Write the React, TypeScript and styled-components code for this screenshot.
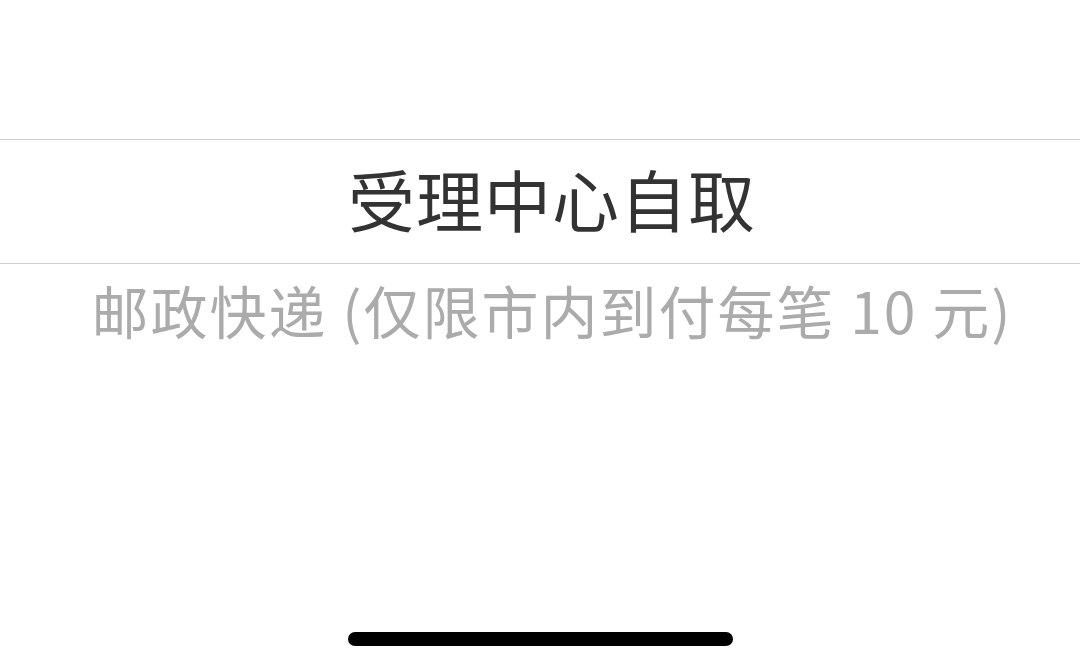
import React from 'react';
import styled, { createGlobalStyle } from 'styled-components';

const GlobalStyle = createGlobalStyle`
  html, body {
    margin: 0;
    padding: 0;
    background: #ffffff;
  }
  body {
    font-family: "Noto Sans CJK SC", "Noto Sans", sans-serif;
  }
`;

const options = ['受理中心自取', '邮政快递 (仅限市内到付每笔 10 元)'];

function App() {
  return (
    <>
      <GlobalStyle />
      <Screen>
        <Wheel>
          <SelectedRow>
            <SelectedText>{options[0]}</SelectedText>
          </SelectedRow>
          <Row>
            <RowText>{options[1]}</RowText>
          </Row>
        </Wheel>
        <HomeBar />
      </Screen>
    </>
  );
}

const Screen = styled.div`
  width: 1080px;
  height: 670px;
  display: flex;
  flex-direction: column;
  background: #ffffff;
  overflow: hidden;
`;

const Wheel = styled.div`
  flex: 1;
  display: flex;
  flex-direction: column;
  padding-top: 139px;
`;

const SelectedRow = styled.div`
  height: 125px;
  display: flex;
  align-items: center;
  justify-content: center;
  padding-left: 24px;
  padding-bottom: 9px;
  box-sizing: border-box;
  border-top: 1.5px solid #cfcfcf;
  border-bottom: 1.5px solid #cfcfcf;
`;

const SelectedText = styled.span`
  font-size: 67px;
  line-height: 1;
  color: #333333;
  letter-spacing: 1px;
`;

const Row = styled.div`
  height: 100px;
  display: flex;
  align-items: center;
  justify-content: center;
  padding-left: 24px;
  padding-bottom: 10px;
  box-sizing: border-box;
`;

const RowText = styled.span`
  font-size: 57px;
  line-height: 1;
  color: #ababab;
  white-space: nowrap;
  letter-spacing: 2px;
`;

const HomeBar = styled.div`
  align-self: center;
  width: 385px;
  height: 14px;
  border-radius: 7px;
  background: #000000;
  margin-bottom: 24px;
`;

export default App;
